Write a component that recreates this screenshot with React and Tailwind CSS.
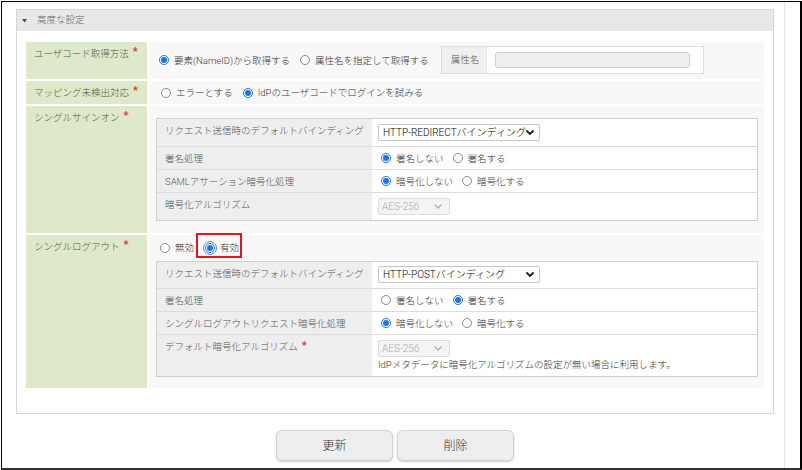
import React from "react";

const font = "font-['Roboto','Noto_Sans_CJK_JP',sans-serif]";

function Radio({ checked, focus }) {
  if (checked) {
    return (
      <span
        className={`w-[10px] h-[10px] shrink-0 rounded-full border border-[#1a73e8] bg-white flex items-center justify-center ${
          focus ? "outline outline-1 outline-offset-1 outline-[#4a90e2]" : ""
        }`}
      >
        <span className="w-[6px] h-[6px] rounded-full bg-[#1a73e8]" />
      </span>
    );
  }
  return <span className="w-[10px] h-[10px] shrink-0 rounded-full border border-[#8a8a8a] bg-white" />;
}

function Option({ checked, label, className = "", focus }) {
  return (
    <span className={`flex items-center ${className}`}>
      <Radio checked={checked} focus={focus} />
      <span className="ml-[5px] leading-[13px] text-[#333] whitespace-nowrap">{label}</span>
    </span>
  );
}

function Req() {
  return <span className="ml-[4px] text-[11px] font-bold leading-[10px] text-[#e0302c] align-top">*</span>;
}

function Chevron({ color = "#222", weight = 1.8 }) {
  return (
    <svg width="8" height="5" viewBox="0 0 8 5" className="shrink-0">
      <path d="M1 1l3 3 3-3" fill="none" stroke={color} strokeWidth={weight} strokeLinecap="round" strokeLinejoin="round" />
    </svg>
  );
}

function Select({ value }) {
  return (
    <div className="w-[162px] h-[17px] border border-[#c6c6c6] rounded-[2px] bg-white flex items-center justify-between pl-[4px] pr-[5px] text-[10px] text-black">
      <span className="whitespace-nowrap">{value}</span>
      <Chevron />
    </div>
  );
}

function DisabledSelect() {
  return (
    <div className="w-[72px] h-[17px] border border-[#dcdcdc] rounded-[2px] bg-[#f4f4f4] flex items-center justify-between pl-[3px] pr-[7px] text-[10px] text-[#aaaaaa]">
      <span>AES-256</span>
      <Chevron color="#aaaaaa" weight={1.2} />
    </div>
  );
}

function InnerRow({ label, req, children, last, valueClass = "py-[5px]" }) {
  return (
    <div className={`grid grid-cols-[215px_1fr] ${last ? "" : "border-b border-[#dcdcdc]"}`}>
      <div className="bg-[#eeeeee] px-[8px] pt-[6px] pb-[4px] leading-[12px] text-[#555]">
        {label}
        {req && <Req />}
      </div>
      <div className={`px-[6px] ${valueClass}`}>{children}</div>
    </div>
  );
}

function RadioPair({ first, second, checked }) {
  return (
    <div className="flex items-center h-[12px] pl-[3px]">
      <Option checked={checked === 0} label={first} />
      <Option checked={checked === 1} label={second} className="ml-[9px]" />
    </div>
  );
}

function Label({ children }) {
  return (
    <div className="bg-[#dde9c8] px-[8px] pt-[5px] leading-[14px] text-[#555]">
      {children}
      <Req />
    </div>
  );
}

export default function App() {
  return (
    <div className={`w-[802px] h-[470px] bg-white pl-[1px] pt-[1px] text-[9.5px] font-light ${font}`}>
      <div className="w-[801px] h-[469px] border-t border-l border-r-2 border-b-2 border-black border-b-[#333] flex">
        <div className="w-[782px]">
          <section className="ml-[14px] mt-[7px] w-[758px] border border-[#d6d6d6]">
            <div className="h-[21px] bg-[#e8e8e8] flex items-center pl-[5px]">
              <svg width="5" height="4" viewBox="0 0 5 4">
                <path d="M0 0h5L2.5 3.5z" fill="#3b4c6b" />
              </svg>
              <span className="ml-[10px] text-[#666]">高度な設定</span>
            </div>

            <div className="pt-[11px] px-[9px] pb-[25px]">
              <div className="grid grid-cols-[121px_1fr] gap-[2px]">
                <Label>ユーザコード取得方法</Label>
                <div className="bg-[#f8f8f8] pt-[4px] pb-[5px] pl-[10px] flex items-center">
                  <Option checked label="要素(NameID)から取得する" />
                  <Option label="属性名を指定して取得する" className="ml-[10px]" />
                  <div className="ml-[12px] w-[263px] h-[28px] border border-[#dcdcdc] bg-white flex">
                    <div className="w-[45px] bg-[#efefef] pl-[9px] pt-[6px] text-[#555] border-r border-[#e2e2e2]">属性名</div>
                    <div className="ml-[8px] mt-[5px] w-[195px] h-[16px] rounded-[3px] bg-[#eeeeee] border border-[#cfcfcf]" />
                  </div>
                </div>

                <Label>マッピング未検出対応</Label>
                <div className="bg-[#f8f8f8] py-[5px] pl-[12px] flex items-center">
                  <Option label="エラーとする" />
                  <Option checked label="IdPのユーザコードでログインを試みる" className="ml-[10px]" />
                </div>

                <Label>シングルサインオン</Label>
                <div className="bg-[#f8f8f8] pt-[12px] pb-[12px] pl-[7px] pr-[6px]">
                  <div className="border border-[#cfcfcf] bg-white">
                    <InnerRow label="リクエスト送信時のデフォルトバインディング">
                      <Select value="HTTP-REDIRECTバインディング" />
                    </InnerRow>
                    <InnerRow label="署名処理">
                      <RadioPair first="署名しない" second="署名する" checked={0} />
                    </InnerRow>
                    <InnerRow label="SAMLアサーション暗号化処理">
                      <RadioPair first="暗号化しない" second="暗号化する" checked={0} />
                    </InnerRow>
                    <InnerRow label="暗号化アルゴリズム" last>
                      <DisabledSelect />
                    </InnerRow>
                  </div>
                </div>

                <Label>シングルログアウト</Label>
                <div className="bg-[#f8f8f8] pt-[5px] pb-[11px] pl-[7px] pr-[6px]">
                  <div className="h-[15px] mb-[6px] pl-[4px] flex items-center">
                    <Option label="無効" />
                    <span className="relative ml-[11px]">
                      <Option checked focus label="有効" />
                      <span className="absolute left-[-9px] top-[-8px] w-[46px] h-[25px] border-2 border-[#e8141b]" />
                    </span>
                  </div>
                  <div className="border border-[#cfcfcf] bg-white">
                    <InnerRow label="リクエスト送信時のデフォルトバインディング" valueClass="pt-[4px] pb-[5px]">
                      <Select value="HTTP-POSTバインディング" />
                    </InnerRow>
                    <InnerRow label="署名処理">
                      <RadioPair first="署名しない" second="署名する" checked={1} />
                    </InnerRow>
                    <InnerRow label="シングルログアウトリクエスト暗号化処理">
                      <RadioPair first="暗号化しない" second="暗号化する" checked={0} />
                    </InnerRow>
                    <InnerRow label="デフォルト暗号化アルゴリズム" req last>
                      <DisabledSelect />
                      <div className="mt-[1px] leading-[13px] text-[#333] whitespace-nowrap">
                        IdPメタデータに暗号化アルゴリズムの設定が無い場合に利用します。
                      </div>
                    </InnerRow>
                  </div>
                </div>
              </div>
            </div>
          </section>

          <div className="ml-[14px] w-[758px] mt-[16px] flex justify-center gap-[4px]">
            <button className="w-[117px] h-[31px] rounded-[6px] bg-[#eeeeee] border border-[#d2d2d2] shadow-[0_1px_2px_rgba(0,0,0,0.2)] text-[12px] text-[#333]">
              更新
            </button>
            <button className="w-[117px] h-[31px] rounded-[6px] bg-[#eeeeee] border border-[#d2d2d2] shadow-[0_1px_2px_rgba(0,0,0,0.2)] text-[12px] text-[#333]">
              削除
            </button>
          </div>
        </div>
        <div className="flex-1 border-l border-[#e4e4e4]" />
      </div>
    </div>
  );
}
